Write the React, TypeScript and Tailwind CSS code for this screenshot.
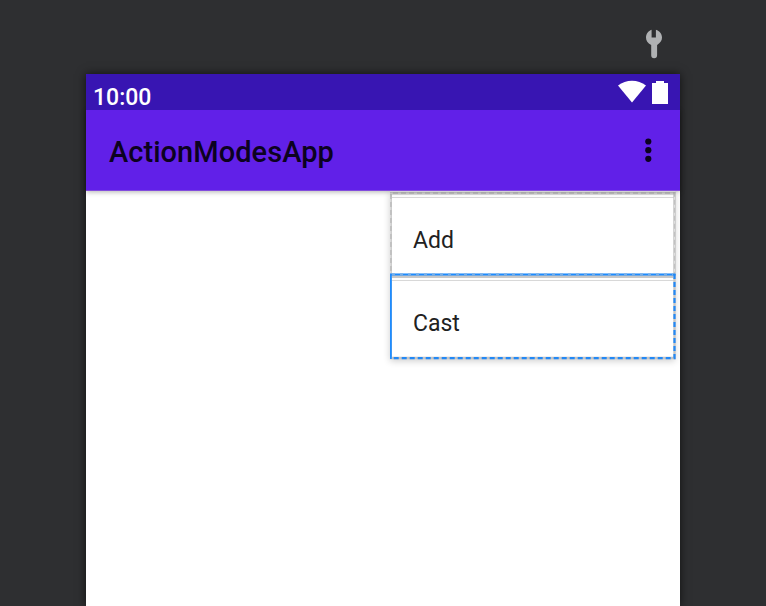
function Wrench() {
  return (
    <svg width="18" height="30" viewBox="0 0 18 30" fill="#afb1b3">
      <path d="M6.600 .8V8.600h4.300V.8C14.600 2 17 5 17 8.600c0 3-1.600 5.500-4.900 7.300v10.400a2.900 2.900 0 0 1-5.900 0V15.900C2.600 14.300 1 11.600 1 8.600 1 5 3.200 2 6.600 .8Z" />
    </svg>
  );
}

function StatusBar() {
  return (
    <div className="relative z-20 flex h-9 items-start bg-[#3815b2] pl-[7px] pr-3 text-white">
      <span className="mt-[9px] text-[23px] font-medium leading-[30px]">10:00</span>
      <div className="ml-auto mt-[6px] flex gap-[6px]">
        <svg width="28" height="24" viewBox="0 0 28 24" fill="currentColor">
          <path d="M0 5.500C8-.8 20-.8 28 5.500L14 22.500Z" />
        </svg>
        <svg width="16" height="24" viewBox="0 0 16 24" fill="currentColor">
          <path d="M0 3h4V1h8v2h4v21H0Z" />
        </svg>
      </div>
    </div>
  );
}

function AppBar() {
  return (
    <div className="relative z-10 flex h-[81px] items-center border-b border-[#824bdd] bg-[#6120e8] pl-[23px] pr-[28px] shadow-[0_1px_5px_rgba(0,0,0,0.3)]">
      <h1 className="mt-[3px] text-[29px] font-medium leading-9 tracking-[0.05px] text-[#0c0220]">ActionModesApp</h1>
      <svg className="ml-auto" width="8" height="26" viewBox="0 0 8 26" fill="#0c0220">
        <circle cx="4.300" cy="4.500" r="3.100" />
        <circle cx="4.300" cy="13.200" r="3.100" />
        <circle cx="4.300" cy="21.800" r="3.100" />
      </svg>
    </div>
  );
}

function MenuItem({ label }: { label: string }) {
  return (
    <div className="flex h-[83px] flex-col bg-white pt-[5px]">
      <div className="h-px bg-[#d8d8d8]" />
      <span className="mt-[28px] pl-[22px] text-[23px] leading-[30px] text-[#212121]">{label}</span>
    </div>
  );
}

function Outlines() {
  return (
    <svg className="absolute left-0 top-0" width="288" height="170" fill="none">
      <path d="M.800 83V2.200H284.500V83" stroke="#c1c1c1" strokeWidth="2.400" />
      <path d="M.800 83V2.200H284.500V83" stroke="#dedede" strokeWidth="1.200" strokeDasharray="3 5" />
      <path d="M2 86H283" stroke="#c8c8c8" strokeWidth="2" />
      <path d="M.800 84H284.500V167H.800Z" stroke="#c4c4c4" strokeWidth="2.400" />
      <path d="M.800 168V83.500H285.500" stroke="#1e8cff" strokeWidth="2" />
      <path d="M2 83.500H283" stroke="#76aee7" strokeWidth="2" strokeDasharray="3 5" />
      <path d="M284.500 83V167.200H1" stroke="#2288f5" strokeWidth="2.200" strokeDasharray="5 3" />
    </svg>
  );
}

export default function App() {
  return (
    <div className="flex h-[606px] w-[766px] flex-col overflow-hidden bg-[#2e2f31] font-[Roboto,'Liberation_Sans',sans-serif]">
      <div className="flex h-[74px] shrink-0 justify-end pr-[103px] pt-[29px]">
        <Wrench />
      </div>
      <div className="ml-[86px] flex w-[594px] grow flex-col bg-white shadow-[0_0_9px_rgba(0,0,0,0.65)]">
        <StatusBar />
        <AppBar />
        <div className="relative ml-[304px] h-[168px] w-[285px] px-[1px] pt-[1px] shadow-[0_2px_7px_rgba(0,0,0,0.2)]">
          <MenuItem label="Add" />
          <MenuItem label="Cast" />
          <Outlines />
        </div>
      </div>
    </div>
  );
}
